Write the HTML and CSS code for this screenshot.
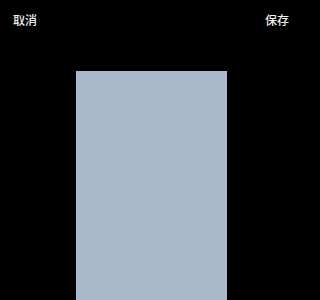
FILE: index.html
```html
<!DOCTYPE html>
<html lang="zh">
<head>
<meta charset="utf-8">
<link rel="stylesheet" href="styles.css">
</head>
<body>
<div class="screen">
  <header class="topbar">
    <span class="action">取消</span>
    <span class="action">保存</span>
  </header>
  <main class="stage">
    <div class="canvas"></div>
  </main>
</div>
</body>
</html>
```
FILE: styles.css
```css
html, body {
  margin: 0;
  padding: 0;
  background: #000;
  overflow: hidden;
}
.screen {
  width: 303px;
  height: 300px;
  display: flex;
  flex-direction: column;
  background: #000;
  overflow: hidden;
}
.topbar {
  display: flex;
  justify-content: space-between;
  align-items: center;
  padding: 13px 14px 0 13px;
  height: 14px;
}
.action {
  font-family: "Noto Sans CJK SC", "Noto Sans", sans-serif;
  font-size: 12px;
  font-weight: 500;
  line-height: 14px;
  color: #ececec;
}
.stage {
  display: flex;
  justify-content: center;
  padding-top: 44px;
  flex: 1;
}
.canvas {
  width: 151px;
  height: 240px;
  flex-shrink: 0;
  background: #a9b9cb;
}
```
